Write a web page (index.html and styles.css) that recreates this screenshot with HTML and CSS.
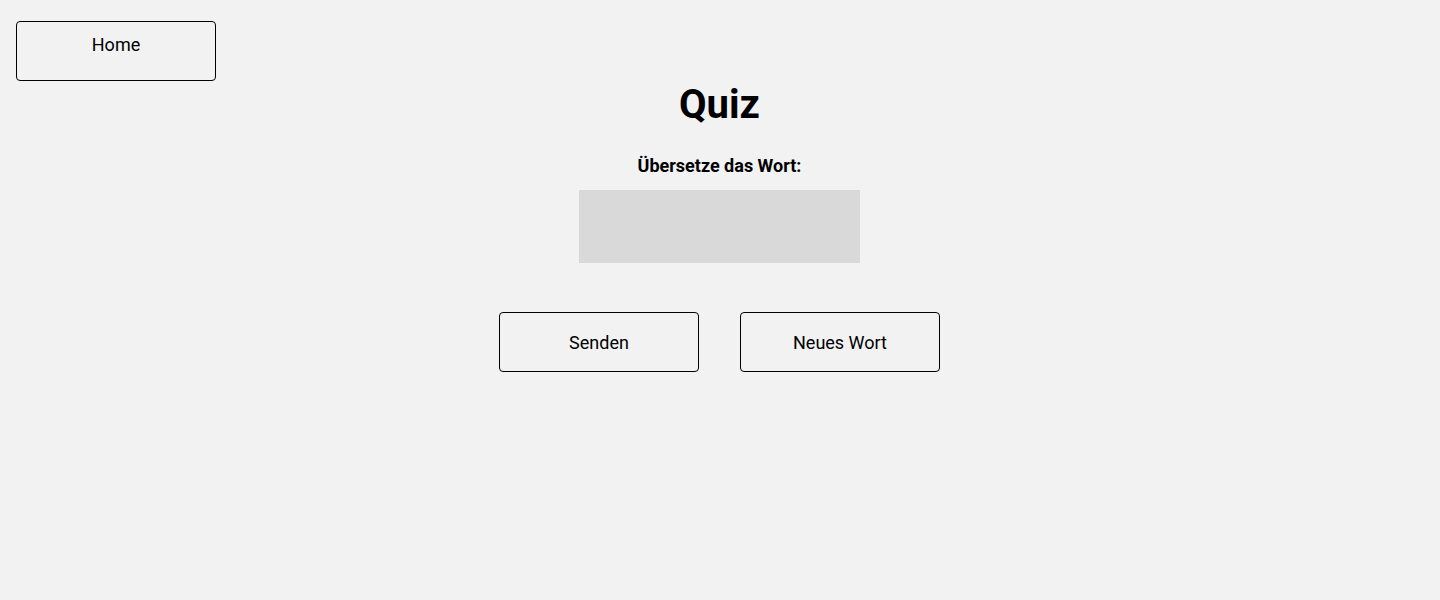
FILE: index.html
```html
<!DOCTYPE html>
<html lang="de">
<head>
<meta charset="utf-8">
<title>Quiz</title>
<link rel="stylesheet" href="styles.css">
</head>
<body>
<header class="top">
  <button class="btn home">Home</button>
</header>
<main class="quiz">
  <h1 class="title">Quiz</h1>
  <p class="label">Übersetze das Wort:</p>
  <div class="word"></div>
  <div class="actions">
    <button class="btn action">Senden</button>
    <button class="btn action">Neues Wort</button>
  </div>
</main>
</body>
</html>
```
FILE: styles.css
```css
html, body {
  margin: 0;
  padding: 0;
}
body {
  background: #f2f2f2;
  font-family: Roboto, "Liberation Sans", sans-serif;
  color: #000;
  height: 600px;
}
.top {
  padding: 21px 16px 0;
  display: flex;
}
.btn {
  box-sizing: border-box;
  width: 200px;
  height: 60px;
  border: 1px solid #000;
  border-radius: 4px;
  background: transparent;
  font-family: Roboto, "Liberation Sans", sans-serif;
  font-size: 18px;
  color: #000;
  padding: 0;
}
.home {
  display: flex;
  justify-content: center;
  align-items: flex-start;
  padding-top: 12px;
}
.quiz {
  display: flex;
  flex-direction: column;
  align-items: center;
  padding-right: 1px;
}
.title {
  margin: 0;
  font-size: 40px;
  line-height: 47px;
  font-weight: 700;
}
.label {
  margin: 27px 0 0;
  font-size: 18px;
  line-height: 21px;
  font-weight: 700;
}
.word {
  margin-top: 14px;
  width: 281px;
  height: 73px;
  background: #d9d9d9;
}
.actions {
  margin-top: 49px;
  display: flex;
  gap: 41px;
}
```
